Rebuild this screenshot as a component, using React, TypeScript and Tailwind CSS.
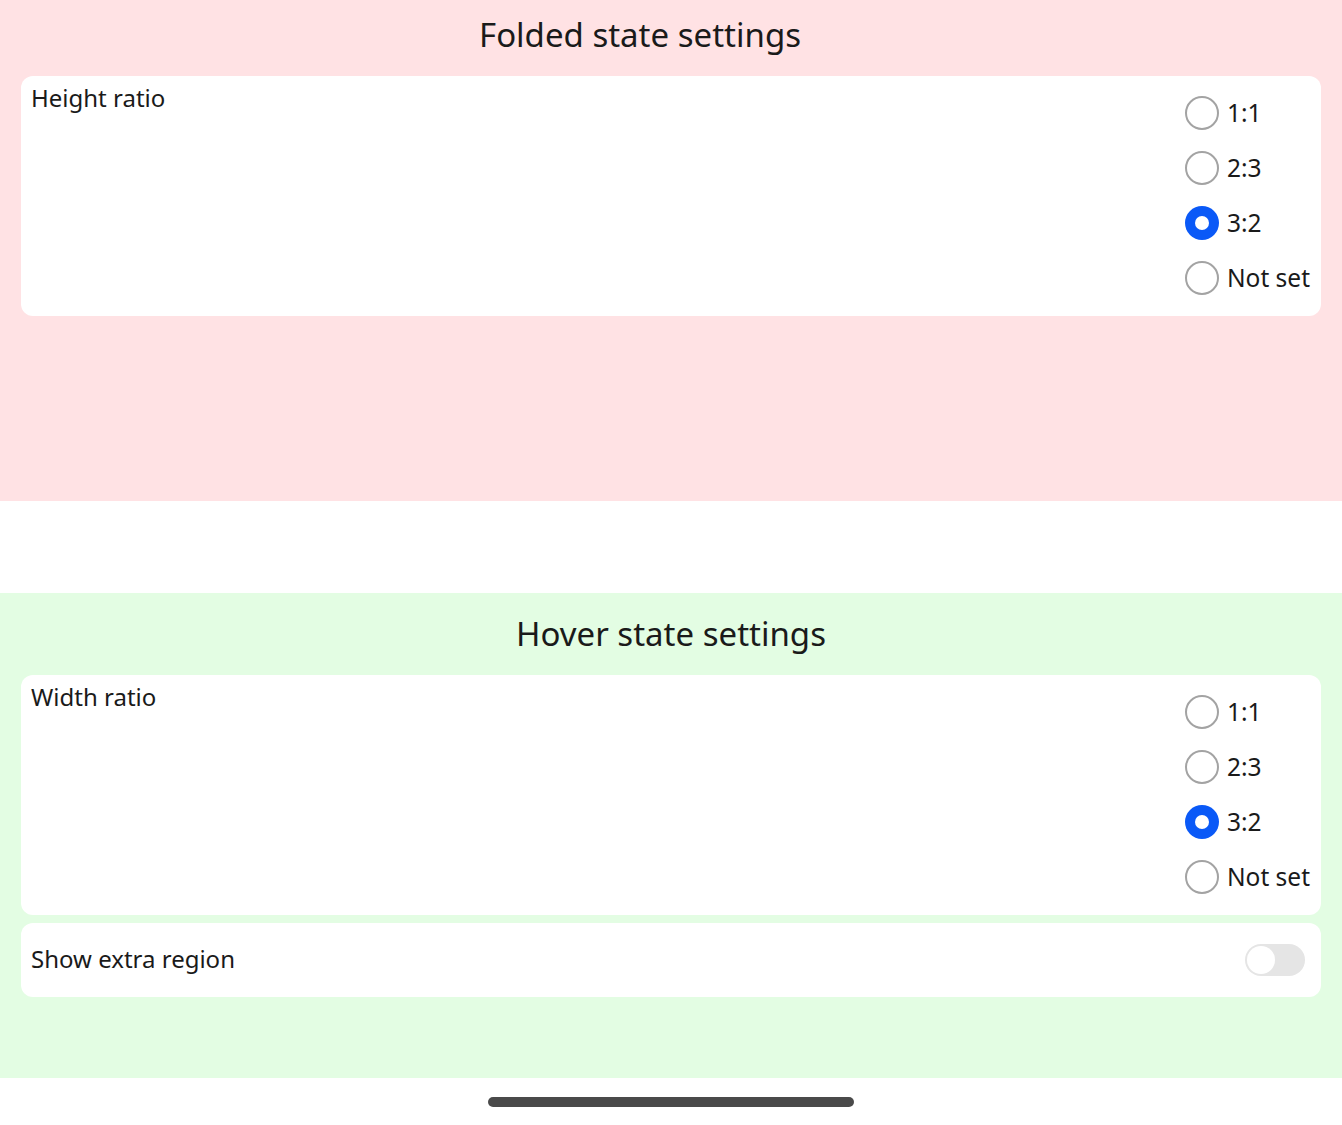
import { useState } from 'react';

const ratios = ['1:1', '2:3', '3:2', 'Not set'];

function RadioGroup({ value, onChange }: { value: string; onChange: (v: string) => void }) {
  return (
    <div className="flex flex-col">
      {ratios.map((r) => (
        <button
          key={r}
          onClick={() => onChange(r)}
          className="h-[55px] flex items-center gap-[8px] text-left"
        >
          {value === r ? (
            <span className="w-[34px] h-[34px] rounded-full bg-[#0a59f7] flex items-center justify-center">
              <span className="w-[14px] h-[14px] rounded-full bg-white" />
            </span>
          ) : (
            <span className="w-[34px] h-[34px] rounded-full border-2 border-[#a3a3a3] bg-white" />
          )}
          <span className="text-[24.5px] leading-[34px] text-[#1a1a1a]">{r}</span>
        </button>
      ))}
    </div>
  );
}

function RatioCard({ label }: { label: string }) {
  const [value, setValue] = useState('3:2');
  return (
    <div className="bg-white rounded-[12px] flex justify-between pl-[10px] pr-[11px] pt-[9px] pb-[11px]">
      <div className="pt-[1px] text-[24px] leading-[24px] text-[#1a1a1a]">{label}</div>
      <RadioGroup value={value} onChange={setValue} />
    </div>
  );
}

export default function App() {
  const [extra, setExtra] = useState(false);

  return (
    <div
      className="w-[1342px] h-[1125px] bg-white flex flex-col"
      style={{ fontFamily: '"Noto Sans", Roboto, sans-serif' }}
    >
      {/* Folded section */}
      <div className="h-[501px] bg-[#ffe2e4] px-[21px]">
        <div className="h-[76px] flex items-center justify-center pr-[62px] pb-[7px] text-[33px] text-[#1a1a1a]">
          Folded state settings
        </div>
        <RatioCard label="Height ratio" />
      </div>

      <div className="h-[92px]" />

      {/* Hover section */}
      <div className="h-[485px] bg-[#e3fde3] px-[21px]">
        <div className="h-[82px] flex items-center justify-center text-[33px] text-[#1a1a1a]">
          Hover state settings
        </div>
        <RatioCard label="Width ratio" />
        <div className="mt-[8px] h-[74px] bg-white rounded-[12px] flex items-center justify-between pl-[10px] pr-[16px]">
          <span className="pb-[3px] text-[24px] text-[#1a1a1a]">Show extra region</span>
          <button
            onClick={() => setExtra(!extra)}
            className={`w-[60px] h-[32px] rounded-full p-[2px] flex ${
              extra ? 'bg-[#0a59f7] justify-end' : 'bg-[#e5e5e5] justify-start'
            }`}
          >
            <span className="w-[28px] h-[28px] rounded-full bg-white" />
          </button>
        </div>
      </div>

      {/* Home indicator */}
      <div className="flex-1 flex justify-center pt-[19px]">
        <div className="w-[366px] h-[10px] rounded-full bg-[#4a4a4a]" />
      </div>
    </div>
  );
}
